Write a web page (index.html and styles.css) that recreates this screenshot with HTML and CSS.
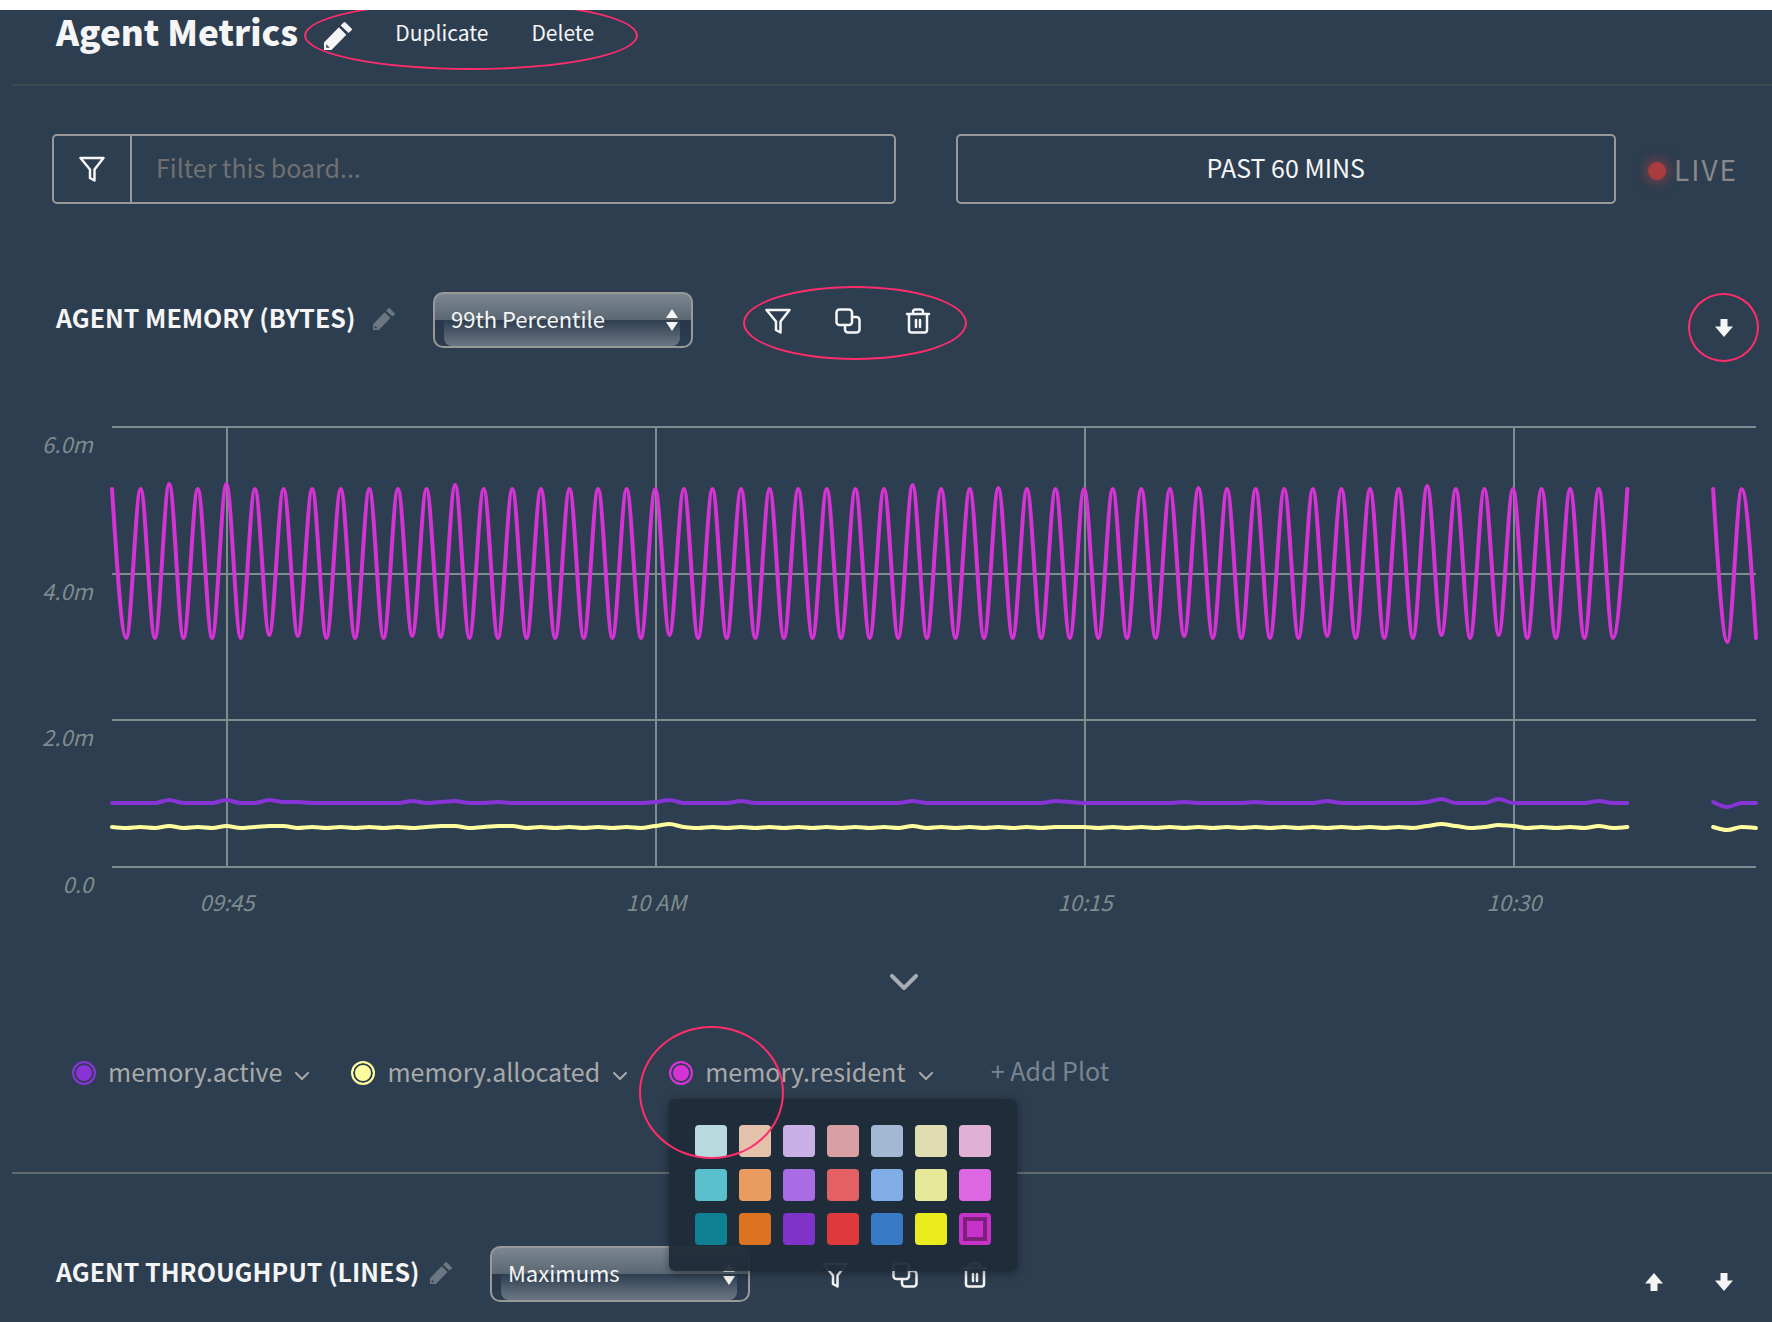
FILE: index.html
```html
<!DOCTYPE html>
<html lang="en">
<head>
    <meta charset="UTF-8">
    <meta name="viewport" content="width=device-width, initial-scale=1.0">
    <title>Agent Metrics</title>
    <link rel="stylesheet" href="styles.css">
</head>
<body>
    <svg class="symbols" aria-hidden="true">
        <symbol id="icon-pencil" viewBox="0 0 64 64">
            <path fill-rule="evenodd" d="M0 64V47L34 12L51 29L17 64ZM5 52V59H12V56H8V52Z"/>
            <path d="M38 8L45 1Q47 -1 49 1L63 15Q65 17 63 19L56 25Z"/>
        </symbol>
        <symbol id="icon-filter" viewBox="0 0 26 26">
            <path class="line" d="M1.500 2H24.500L15.500 13.500V24.500L11 22V13.500Z"/>
        </symbol>
        <symbol id="icon-copy" viewBox="0 0 26 26">
            <rect class="line" x="1.500" y="1.500" width="15.500" height="15.500" rx="3"/>
            <path class="line" d="M17 9H21.500A3 3 0 0 1 24.500 12V21.500A3 3 0 0 1 21.500 24.500H13A3 3 0 0 1 10 21.500V17"/>
        </symbol>
        <symbol id="icon-trash" viewBox="0 0 26 26">
            <path class="line" d="M2 6H24M8 6V4A2.500 2.500 0 0 1 10.500 1.500H15.500A2.500 2.500 0 0 1 18 4V6M4 6V22A2.500 2.500 0 0 0 6.500 24.500H19.500A2.500 2.500 0 0 0 22 22V6M11 12V19M15 12V19"/>
        </symbol>
        <symbol id="icon-down" viewBox="0 0 18 18">
            <path d="M5.500 0H12.500V7.500H18L9 18L0 7.500H5.500Z"/>
        </symbol>
        <symbol id="icon-up" viewBox="0 0 18 18">
            <path d="M9 0L18 10.500H12.500V18H5.500V10.500H0Z"/>
        </symbol>
        <symbol id="icon-chevron" viewBox="0 0 28 16">
            <path class="chevron-line" d="M2 2L14 14L26 2"/>
        </symbol>
        <symbol id="icon-sort" viewBox="0 0 12 24">
            <path d="M6 1L12 10H0ZM0 14H12L6 23Z"/>
        </symbol>
    </svg>

    <header class="board-header">
        <h1>Agent Metrics</h1>
        <div class="board-actions">
            <button class="icon-button" aria-label="Rename board"><svg class="icon-rename"><use href="#icon-pencil"/></svg></button>
            <a href="#duplicate">Duplicate</a>
            <a href="#delete">Delete</a>
            <span class="mark mark-actions"></span>
        </div>
    </header>

    <div class="filters">
        <div class="filter-box">
            <label for="boardFilter" aria-label="Filter"><svg class="icon"><use href="#icon-filter"/></svg></label>
            <input id="boardFilter" type="text" placeholder="Filter this board...">
        </div>
        <button class="time-range">PAST 60 MINS</button>
        <div class="live"><span class="live-dot"></span>LIVE</div>
    </div>

    <section class="panel">
        <div class="panel-header">
            <h2 class="title-memory">AGENT MEMORY (BYTES)</h2>
            <button class="icon-button" aria-label="Rename chart"><svg class="icon-edit"><use href="#icon-pencil"/></svg></button>
            <div class="select-box">
                <select aria-label="Aggregation">
                    <option>99th Percentile</option>
                    <option>Maximums</option>
                </select>
                <svg class="sort"><use href="#icon-sort"/></svg>
            </div>
            <div class="panel-tools">
                <button class="icon-button" aria-label="Filter"><svg class="icon"><use href="#icon-filter"/></svg></button>
                <button class="icon-button" aria-label="Duplicate"><svg class="icon"><use href="#icon-copy"/></svg></button>
                <button class="icon-button" aria-label="Delete"><svg class="icon"><use href="#icon-trash"/></svg></button>
                <span class="mark mark-tools"></span>
            </div>
            <div class="panel-move">
                <button class="icon-button move-button" aria-label="Move down"><svg class="icon-move"><use href="#icon-down"/></svg><span class="mark mark-move"></span></button>
            </div>
        </div>

        <svg class="chart" id="memoryChart" role="img" aria-label="Agent memory"></svg>

        <div class="collapse">
            <button class="icon-button" aria-label="Collapse"><svg class="icon-collapse"><use href="#icon-chevron"/></svg></button>
        </div>

        <div class="legend">
            <div class="plot">
                <button class="icon-button dot dot-active" aria-label="Color of memory.active"></button>
                <button class="plot-name">memory.active<svg class="icon-plot"><use href="#icon-chevron"/></svg></button>
            </div>
            <div class="plot">
                <button class="icon-button dot dot-allocated" aria-label="Color of memory.allocated"></button>
                <button class="plot-name">memory.allocated<svg class="icon-plot"><use href="#icon-chevron"/></svg></button>
            </div>
            <div class="plot">
                <button class="icon-button dot dot-resident" aria-label="Color of memory.resident"></button>
                <button class="plot-name">memory.resident<svg class="icon-plot"><use href="#icon-chevron"/></svg></button>
                <div class="palette" id="palette"></div>
                <span class="mark mark-color"></span>
            </div>
            <button class="add-plot">+ Add Plot</button>
        </div>
    </section>

    <section class="panel panel-next">
        <div class="panel-header">
            <h2 class="title-throughput">AGENT THROUGHPUT (LINES)</h2>
            <button class="icon-button" aria-label="Rename chart"><svg class="icon-edit"><use href="#icon-pencil"/></svg></button>
            <div class="select-box">
                <select aria-label="Aggregation">
                    <option>Maximums</option>
                    <option>99th Percentile</option>
                </select>
                <svg class="sort"><use href="#icon-sort"/></svg>
            </div>
            <div class="panel-tools">
                <button class="icon-button" aria-label="Filter"><svg class="icon"><use href="#icon-filter"/></svg></button>
                <button class="icon-button" aria-label="Duplicate"><svg class="icon"><use href="#icon-copy"/></svg></button>
                <button class="icon-button" aria-label="Delete"><svg class="icon"><use href="#icon-trash"/></svg></button>
            </div>
            <div class="panel-move">
                <button class="icon-button move-button" aria-label="Move up"><svg class="icon-move"><use href="#icon-up"/></svg></button>
                <button class="icon-button move-button" aria-label="Move down"><svg class="icon-move"><use href="#icon-down"/></svg></button>
            </div>
        </div>
    </section>

    <script src="board.js"></script>
</body>
</html>
```
FILE: styles.css
```css
* {
    box-sizing: border-box;
}
body {
    margin: 0;
    min-height: 100vh;
    border-top: 10px solid #ffffff;
    background-color: #2d3e50;
    color: #f5f5f5;
    font-family: "Noto Sans CJK SC", "Open Sans", sans-serif;
    overflow-x: hidden;
}
button, input, select {
    font-family: inherit;
    color: inherit;
}
button {
    cursor: pointer;
}
a {
    color: inherit;
    text-decoration: none;
}
.symbols {
    display: none;
}
svg {
    display: block;
    fill: currentColor;
}
.line {
    fill: none;
    stroke: currentColor;
    stroke-width: 2.5;
    stroke-linejoin: round;
    stroke-linecap: round;
}
.chevron-line {
    fill: none;
    stroke: currentColor;
    stroke-width: 4;
    stroke-linejoin: round;
    stroke-linecap: round;
}
.icon {
    width: 26px;
    height: 26px;
}
.icon-button {
    display: block;
    padding: 0;
    border: none;
    background: none;
}
/* hand-drawn highlight rings */
.mark {
    position: absolute;
    border: 2px solid #ff2d6b;
    border-radius: 50%;
    pointer-events: none;
}

/* board header */
.board-header {
    display: flex;
    align-items: center;
    height: 76px;
    padding: 0 56px 34px;
    position: relative;
}
.board-header::after {
    content: "";
    position: absolute;
    left: 12px;
    right: 0;
    bottom: 0;
    height: 2px;
    background-color: #414950;
}
h1 {
    margin: 0;
    font-size: 35px;
    font-weight: 900;
    line-height: 48px;
}
.board-actions {
    display: flex;
    align-items: center;
    gap: 43px;
    margin: 2px 0 0 26px;
    font-size: 21px;
    line-height: 32px;
    position: relative;
}
.icon-rename {
    width: 28px;
    height: 28px;
    margin-top: 8px;
}
.mark-actions {
    left: -20px;
    right: -44px;
    top: -13px;
    height: 69px;
}

/* filters */
.filters {
    display: flex;
    align-items: center;
    margin-top: 48px;
    padding: 0 35px 0 52px;
}
.filter-box {
    flex: 844 1 0;
    display: flex;
    height: 70px;
    margin-right: 60px;
    border: 2px solid #999999;
    border-radius: 5px;
}
.filter-box label {
    display: flex;
    align-items: center;
    justify-content: center;
    width: 78px;
    border-right: 2px solid #999999;
}
.filter-box input {
    flex: 1;
    min-width: 0;
    padding: 0 24px 4px;
    border: none;
    outline: none;
    background: none;
    font-size: 25px;
}
.filter-box input::placeholder {
    color: #707070;
    opacity: 1;
}
.time-range {
    flex: 660 1 0;
    height: 70px;
    padding: 0 0 4px;
    border: 2px solid #999999;
    border-radius: 5px;
    background: none;
    font-size: 25px;
}
.live {
    display: flex;
    align-items: center;
    gap: 8px;
    width: 89px;
    margin-left: 32px;
    color: #888888;
    font-size: 28px;
    line-height: 40px;
    letter-spacing: 2px;
}
.live-dot {
    flex: none;
    width: 18px;
    height: 18px;
    margin-top: 4px;
    border-radius: 50%;
    background-color: #a93c3c;
    box-shadow: 0 0 12px 2px rgba(190, 60, 60, 0.6);
}

/* panels */
.panel {
    margin-top: 88px;
}
.panel-header {
    display: flex;
    align-items: center;
    height: 56px;
    padding: 0 39px 0 56px;
}
h2 {
    flex: none;
    margin: 0 0 6px;
    white-space: nowrap;
    font-size: 25px;
    font-weight: 700;
    line-height: 36px;
}
.title-memory {
    width: 317px;
}
.title-throughput {
    width: 374px;
}
.icon-edit {
    width: 22px;
    height: 22px;
    margin-bottom: 2px;
    color: #6b7680;
}
.select-box {
    position: relative;
    width: 260px;
    height: 56px;
    margin-left: 38px;
    border: 2px solid #999999;
    border-radius: 10px;
    background: linear-gradient(#7b868f, #5a6772 50%, #28374a 50%, #2d3e50);
}
.select-box::before {
    content: "";
    position: absolute;
    left: 9px;
    right: 11px;
    top: 26px;
    bottom: 0;
    border-radius: 0 0 8px 8px;
    background: linear-gradient(#2d3e50, #6c7784);
}
.select-box select {
    position: relative;
    width: 100%;
    height: 100%;
    padding: 0 16px 4px;
    border: none;
    outline: none;
    appearance: none;
    background: none;
    font-size: 22px;
}
.select-box option {
    background-color: #2d3e50;
}
.sort {
    position: absolute;
    right: 13px;
    top: 14px;
    width: 12px;
    height: 24px;
    pointer-events: none;
}
.panel-tools {
    display: flex;
    gap: 44px;
    margin: 2px 0 0 72px;
    position: relative;
}
.mark-tools {
    left: -22px;
    right: -36px;
    top: -22px;
    height: 74px;
}
.panel-move {
    display: flex;
    gap: 52px;
    margin-left: auto;
    padding-top: 16px;
}
.move-button {
    position: relative;
}
.icon-move {
    width: 18px;
    height: 18px;
}
.mark-move {
    left: -27px;
    top: -26px;
    width: 71px;
    height: 69px;
}

/* chart */
.chart {
    width: 100%;
    height: 540px;
    margin-top: 52px;
}
.grid-line {
    stroke: #7f8c8d;
    stroke-width: 2;
}
.axis-label {
    fill: #7f8c8d;
    font-size: 22px;
    font-style: italic;
}
.series {
    fill: none;
    stroke-width: 4;
    stroke-linecap: round;
    stroke-linejoin: round;
}
.collapse {
    display: flex;
    justify-content: center;
    padding: 34px 0 0 36px;
    color: #a8adb4;
}
.icon-collapse {
    width: 28px;
    height: 16px;
}

/* legend */
.legend {
    display: flex;
    align-items: center;
    gap: 42px;
    margin-top: 65px;
    padding-left: 72px;
    height: 36px;
}
.plot {
    display: flex;
    align-items: center;
    position: relative;
}
.dot {
    width: 24px;
    height: 24px;
    border: 2px solid currentColor;
    border-radius: 50%;
    background-color: currentColor;
    box-shadow: inset 0 0 0 2px #2d3e50;
}
.dot-active {
    color: #8833d6;
}
.dot-allocated {
    color: #fdfda0;
}
.dot-resident {
    color: #d633d6;
}
.plot-name, .add-plot {
    display: flex;
    align-items: center;
    padding: 0;
    border: none;
    background: none;
    color: #a9a9a9;
    font-size: 25px;
    line-height: 32px;
}
.plot-name {
    margin-left: 12px;
    padding-bottom: 4px;
}
.icon-plot {
    width: 14px;
    height: 8px;
    margin: 10px 0 0 13px;
}
.add-plot {
    margin: 0 0 6px 16px;
    color: #7b8590;
}
.palette {
    position: absolute;
    left: 0;
    top: 44px;
    z-index: 1;
    display: grid;
    grid-template-columns: repeat(7, 32px);
    gap: 12px;
    padding: 26px;
    border-radius: 6px;
    background-color: rgba(31, 43, 56, 0.95);
    box-shadow: 0 2px 8px rgba(0, 0, 0, 0.4);
}
.swatch {
    width: 32px;
    height: 32px;
    padding: 0;
    border: none;
    border-radius: 4px;
}
.swatch.selected {
    border: 4px solid transparent;
    box-shadow: inset 0 0 0 4px #7c207c;
}
.mark-color {
    left: -30px;
    top: -29px;
    z-index: 2;
    width: 145px;
    height: 133px;
}

.panel-next {
    margin-top: 81px;
    margin-left: 12px;
    padding: 72px 0 20px;
    border-top: 2px solid #62696f;
}
.panel-next .panel-header {
    padding-left: 44px;
}
```
FILE: board.js
```js
const svgNS = 'http://www.w3.org/2000/svg';
const plotTop = 27;
const plotBottom = 467;
const plotLeft = 112;
const plotRight = 16;
const steps = 115; // one sample every 30 seconds

const colors = [
    '#b8dade', '#e3c1aa', '#c9b0e6', '#d8a0a2', '#a2b8d3', '#e0deb0', '#e0b0d6',
    '#5ac0ce', '#e99b60', '#a86ce4', '#e36163', '#80ade6', '#e6ea98', '#dc68e4',
    '#0e8092', '#dd7221', '#8033c8', '#de3a3b', '#387ac5', '#eaec1e', '#c733c9'
];

// value in pixels from the top of the chart; peaks and dips are the samples that differ
const residentShift = { 4: -5, 8: -5, 11: -3, 13: -2, 21: -2, 23: -1, 24: -4, 39: -3, 56: -4, 62: -1, 75: -2, 76: -1, 85: -2, 92: -3, 93: -3, 97: -3, 113: 4 };
const activeShift = { 4: -3, 8: -3, 11: -3, 12: -1, 13: -1, 21: -2, 23: -1, 24: -2, 27: -1, 38: -1, 39: -3, 44: -2, 56: -2, 66: -2, 67: -1, 75: -1, 80: -1, 85: -2, 92: -1, 93: -4, 97: -4, 104: -2, 112: -1, 113: 4 };
const allocatedShift = { 4: -1, 8: -1, 11: -2, 12: -1, 23: -2, 24: -1, 27: -2, 28: -1, 38: -1, 39: -4, 56: -1, 67: -1, 92: -1, 93: -4, 94: -1, 97: -3, 98: -1, 104: -1, 113: 2 };

function makeSeries(base, shift) {
    const points = [];
    for (let i = 0; i <= steps; i++) {
        points.push(base(i) + (shift[i] || 0));
    }
    return points;
}

const series = [
    { color: '#8833d6', points: makeSeries(i => 403, activeShift) },
    { color: '#fdfda0', points: makeSeries(i => i % 2 ? 428 : 427, allocatedShift) },
    { color: '#d633d6', points: makeSeries(i => i % 2 ? 238 : 89, residentShift) }
];

function add(parent, name, attrs, text) {
    const el = document.createElementNS(svgNS, name);
    for (const key in attrs) {
        el.setAttribute(key, attrs[key]);
    }
    if (text) {
        el.textContent = text;
    }
    parent.appendChild(el);
}

// monotone cubic interpolation between samples
function curve(xs, ys) {
    const n = xs.length;
    const slopes = [];
    for (let i = 0; i < n - 1; i++) {
        slopes.push((ys[i + 1] - ys[i]) / (xs[i + 1] - xs[i]));
    }
    const t = [];
    for (let i = 1; i < n - 1; i++) {
        const a = slopes[i - 1];
        const b = slopes[i];
        t[i] = a * b <= 0 ? 0 : Math.sign(a) * Math.min(Math.abs(a), Math.abs(b), Math.abs(a + b) / 4);
    }
    t[0] = (3 * slopes[0] - t[1]) / 2;
    t[n - 1] = (3 * slopes[n - 2] - t[n - 2]) / 2;

    let d = `M${xs[0]},${ys[0]}`;
    for (let i = 0; i < n - 1; i++) {
        const dx = (xs[i + 1] - xs[i]) / 3;
        d += `C${xs[i] + dx},${ys[i] + t[i] * dx},${xs[i + 1] - dx},${ys[i + 1] - t[i + 1] * dx},${xs[i + 1]},${ys[i + 1]}`;
    }
    return d;
}

function drawChart() {
    const chart = document.getElementById('memoryChart');
    chart.innerHTML = '';
    const right = chart.clientWidth - plotRight;
    const step = (right - plotLeft) / steps;

    ['6.0m', '4.0m', '2.0m', '0.0'].forEach((label, i) => {
        const y = Math.round(plotTop + i * (plotBottom - plotTop) / 3);
        add(chart, 'line', { class: 'grid-line', x1: plotLeft, x2: right, y1: y, y2: y });
        add(chart, 'text', { class: 'axis-label', x: 93, y: y + 26, 'text-anchor': 'end' }, label);
    });
    ['09:45', '10 AM', '10:15', '10:30'].forEach((label, i) => {
        const x = Math.round(plotLeft + (8 + i * 30) * step) + 1;
        add(chart, 'line', { class: 'grid-line', x1: x, x2: x, y1: plotTop, y2: plotBottom });
        add(chart, 'text', { class: 'axis-label', x: x, y: plotBottom + 44, 'text-anchor': 'middle' }, label);
    });

    series.forEach(s => {
        // no data was reported between the two ranges
        [[0, 106], [112, 115]].forEach(([from, to]) => {
            const xs = [];
            for (let i = from; i <= to; i++) {
                xs.push(plotLeft + i * step);
            }
            add(chart, 'path', { class: 'series', stroke: s.color, d: curve(xs, s.points.slice(from, to + 1)) });
        });
    });
}

function drawPalette() {
    const palette = document.getElementById('palette');
    colors.forEach((color, i) => {
        const swatch = document.createElement('button');
        swatch.className = i === colors.length - 1 ? 'swatch selected' : 'swatch';
        swatch.style.backgroundColor = color;
        swatch.setAttribute('aria-label', color);
        palette.appendChild(swatch);
    });
}

drawPalette();
drawChart();
window.addEventListener('resize', drawChart);
```
